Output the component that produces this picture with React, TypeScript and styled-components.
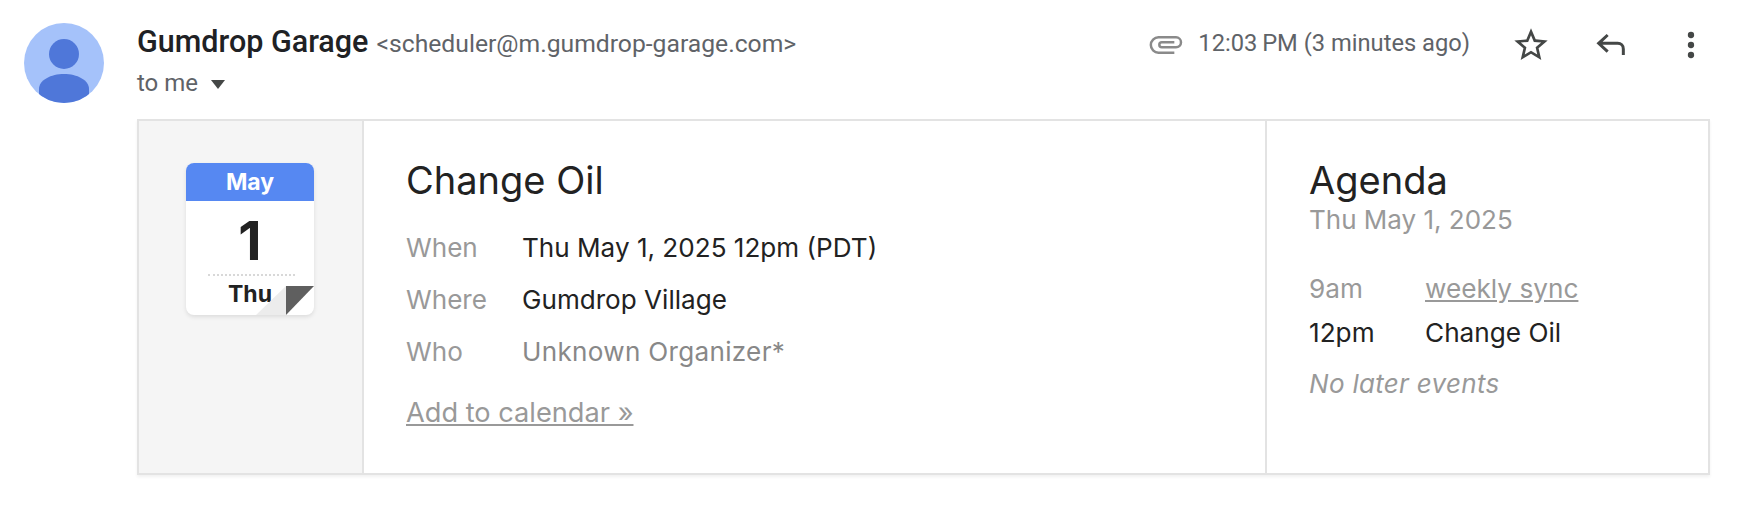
import styled, { createGlobalStyle } from 'styled-components';

const GlobalStyle = createGlobalStyle`
  html, body {
    margin: 0;
    padding: 0;
    background: #fff;
    font-family: Roboto, "Liberation Sans", sans-serif;
  }
`;

const Page = styled.div`
  display: flex;
  gap: 33px;
  padding: 23px 38px 0 24px;
  height: 516px;
  box-sizing: border-box;
`;

const Avatar = styled.svg`
  width: 80px;
  height: 80px;
  flex-shrink: 0;
`;

const Main = styled.div`
  flex: 1;
  min-width: 0;
`;

const Header = styled.div`
  display: flex;
  justify-content: space-between;
  height: 96px;
`;

const Sender = styled.div`
  display: flex;
  flex-direction: column;
  padding-top: 3px;
`;

const SenderLine = styled.div`
  display: flex;
  align-items: baseline;
  gap: 8px;
  line-height: 32px;
`;

const Name = styled.span`
  font-size: 30.5px;
  font-weight: 500;
  color: #202124;
`;

const Email = styled.span`
  font-size: 24.7px;
  color: #5f6368;
`;

const ToMe = styled.div`
  display: flex;
  align-items: center;
  gap: 13px;
  margin-top: 8px;
  font-size: 24px;
  line-height: 30px;
  color: #5f6368;
`;

const Caret = styled.span`
  width: 0;
  height: 0;
  border-left: 7.5px solid transparent;
  border-right: 7.5px solid transparent;
  border-top: 9px solid #444746;
  margin-top: 2px;
`;

const Actions = styled.div`
  display: flex;
  align-items: flex-start;
  padding-top: 4px;
  margin-right: -1px;
`;

const ClipIcon = styled.svg`
  width: 40px;
  height: 40px;
  fill: none;
  stroke: #8a8a8a;
  stroke-width: 1.5;
  margin-top: -3px;
  margin-right: 12px;
`;

const Time = styled.span`
  font-size: 23.7px;
  line-height: 32px;
  color: #5f6368;
  margin-right: 41px;
`;

const ActionIcon = styled.svg<{ $gap?: number }>`
  width: 40px;
  height: 40px;
  margin-left: ${(props) => props.$gap ?? 0}px;
  margin-top: -2px;
  flex-shrink: 0;
`;

const Card = styled.div`
  display: flex;
  height: 356px;
  box-sizing: border-box;
  border: 2px solid #e3e3e3;
  box-shadow: 0 2px 3px rgba(0, 0, 0, 0.06);
  color: #222;
  font-family: Inter, Roboto, sans-serif;
`;

const DatePanel = styled.div`
  width: 225px;
  flex-shrink: 0;
  box-sizing: border-box;
  padding: 42px 0 0 47px;
  background: #f5f5f5;
  border-right: 2px solid #e3e3e3;
`;

const CalendarIcon = styled.div`
  position: relative;
  width: 128px;
  height: 152px;
  border-radius: 8px;
  background: #fff;
  overflow: hidden;
  box-shadow: 0 2px 4px rgba(0, 0, 0, 0.1);
  text-align: center;
`;

const Month = styled.div`
  height: 38px;
  background: #5688f2;
  color: #fff;
  font-size: 23px;
  font-weight: 700;
  line-height: 38px;
`;

const DayNumber = styled.div`
  height: 73px;
  font-size: 54px;
  font-weight: 700;
  line-height: 80px;
  color: #222;
`;

const Dotted = styled.div`
  margin: 0 19px 0 22px;
  border-top: 2px dotted #d8d8d8;
`;

const Weekday = styled.div`
  font-size: 23px;
  font-weight: 700;
  line-height: 38px;
  color: #222;
  margin-top: -1px;
`;

const Fold = styled.svg`
  position: absolute;
  right: 0;
  bottom: 0;
  width: 58px;
  height: 29px;
`;

const EventPanel = styled.div`
  flex: 1;
  box-sizing: border-box;
  padding: 36px 0 0 42px;
  border-right: 2px solid #e3e3e3;
`;

const Title = styled.div`
  font-size: 38px;
  line-height: 46px;
  color: #222;
`;

const DetailGrid = styled.div`
  display: grid;
  grid-template-columns: 116px 1fr;
  grid-auto-rows: 52px;
  align-items: center;
  margin-top: 18px;
  font-size: 26.1px;
`;

const Label = styled.span`
  color: #999;
`;

const Value = styled.span<{ $muted?: boolean }>`
  color: ${(props) => (props.$muted ? '#888' : '#222')};
  letter-spacing: ${(props) => (props.$muted ? '0.3px' : '0')};
`;

const CalendarLink = styled.a`
  display: block;
  margin-top: 18px;
  font-size: 27.2px;
  line-height: 36px;
  color: #999;
  text-decoration: underline;
`;

const AgendaPanel = styled.div`
  width: 441px;
  flex-shrink: 0;
  box-sizing: border-box;
  padding: 36px 0 0 42px;
`;

const AgendaDate = styled.div`
  margin-top: -1px;
  font-size: 26px;
  line-height: 36px;
  color: #999;
`;

const AgendaGrid = styled.div`
  display: grid;
  grid-template-columns: 116px 1fr;
  grid-auto-rows: 44px;
  align-items: center;
  margin-top: 28px;
  font-size: 26.2px;
`;

const AgendaLink = styled.a`
  color: #999;
  text-decoration: underline;
`;

const NoEvents = styled.div`
  margin-top: 12px;
  font-size: 26px;
  line-height: 36px;
  letter-spacing: 0.3px;
  font-style: italic;
  color: #999;
`;

export default function App() {
  return (
    <>
      <GlobalStyle />
      <Page>
        <Avatar viewBox="0 0 80 80">
          <defs>
            <clipPath id="avatar-clip">
              <circle cx="40" cy="40" r="40" />
            </clipPath>
          </defs>
          <circle cx="40" cy="40" r="40" fill="#a5c2fa" />
          <g clipPath="url(#avatar-clip)" fill="#4f77d9">
            <ellipse cx="40" cy="31" rx="15" ry="15" />
            <path d="M15 66c0-9 12-15 25-15s25 6 25 15v14H15z" />
          </g>
        </Avatar>
        <Main>
          <Header>
            <Sender>
              <SenderLine>
                <Name>Gumdrop Garage</Name>
                <Email>&lt;scheduler@m.gumdrop-garage.com&gt;</Email>
              </SenderLine>
              <ToMe>
                to me
                <Caret />
              </ToMe>
            </Sender>
            <Actions>
              <ClipIcon viewBox="0 0 24 24">
                <path d="M17 17.2H7.5a4.6 4.6 0 0 1 0-9.2H18a3 3 0 0 1 0 6H9.5a1.5 1.5 0 0 1 0-3H17" />
              </ClipIcon>
              <Time>12:03&#8201;PM (3 minutes ago)</Time>
              <ActionIcon viewBox="0 0 24 24" fill="#444746">
                <path d="M22 9.24l-7.19-.62L12 2 9.19 8.63 2 9.24l5.46 4.73L5.82 21 12 17.27 18.18 21l-1.63-7.03L22 9.24zM12 15.4l-3.76 2.27 1-4.28-3.32-2.88 4.38-.38L12 6.1l1.71 4.04 4.38.38-3.32 2.88 1 4.28L12 15.4z" />
              </ActionIcon>
              <ActionIcon $gap={40} viewBox="0 0 24 24" fill="none" stroke="#444746" strokeWidth="1.8">
                <path d="M10 6 4.6 11l5.4 5M4.6 11H16c2 0 3.4 1.4 3.4 3.4V18" />
              </ActionIcon>
              <ActionIcon $gap={40} viewBox="0 0 24 24" fill="#444746">
                <circle cx="12" cy="6" r="1.9" />
                <circle cx="12" cy="12" r="1.9" />
                <circle cx="12" cy="18" r="1.9" />
              </ActionIcon>
            </Actions>
          </Header>
          <Card>
            <DatePanel>
              <CalendarIcon>
                <Month>May</Month>
                <DayNumber>1</DayNumber>
                <Dotted />
                <Weekday>Thu</Weekday>
                <Fold viewBox="0 0 58 29">
                  <path d="M30 0 0 29h30z" fill="#ececec" />
                  <path d="M30 0h28L30 29z" fill="#5f5f5f" />
                </Fold>
              </CalendarIcon>
            </DatePanel>
            <EventPanel>
              <Title>Change Oil</Title>
              <DetailGrid>
                <Label>When</Label>
                <Value>Thu May 1, 2025 12pm (PDT)</Value>
                <Label>Where</Label>
                <Value>Gumdrop Village</Value>
                <Label>Who</Label>
                <Value $muted>Unknown Organizer*</Value>
              </DetailGrid>
              <CalendarLink>Add to calendar »</CalendarLink>
            </EventPanel>
            <AgendaPanel>
              <Title>Agenda</Title>
              <AgendaDate>Thu May 1, 2025</AgendaDate>
              <AgendaGrid>
                <Label>9am</Label>
                <AgendaLink>weekly sync</AgendaLink>
                <Value>12pm</Value>
                <Value>Change Oil</Value>
              </AgendaGrid>
              <NoEvents>No later events</NoEvents>
            </AgendaPanel>
          </Card>
        </Main>
      </Page>
    </>
  );
}
